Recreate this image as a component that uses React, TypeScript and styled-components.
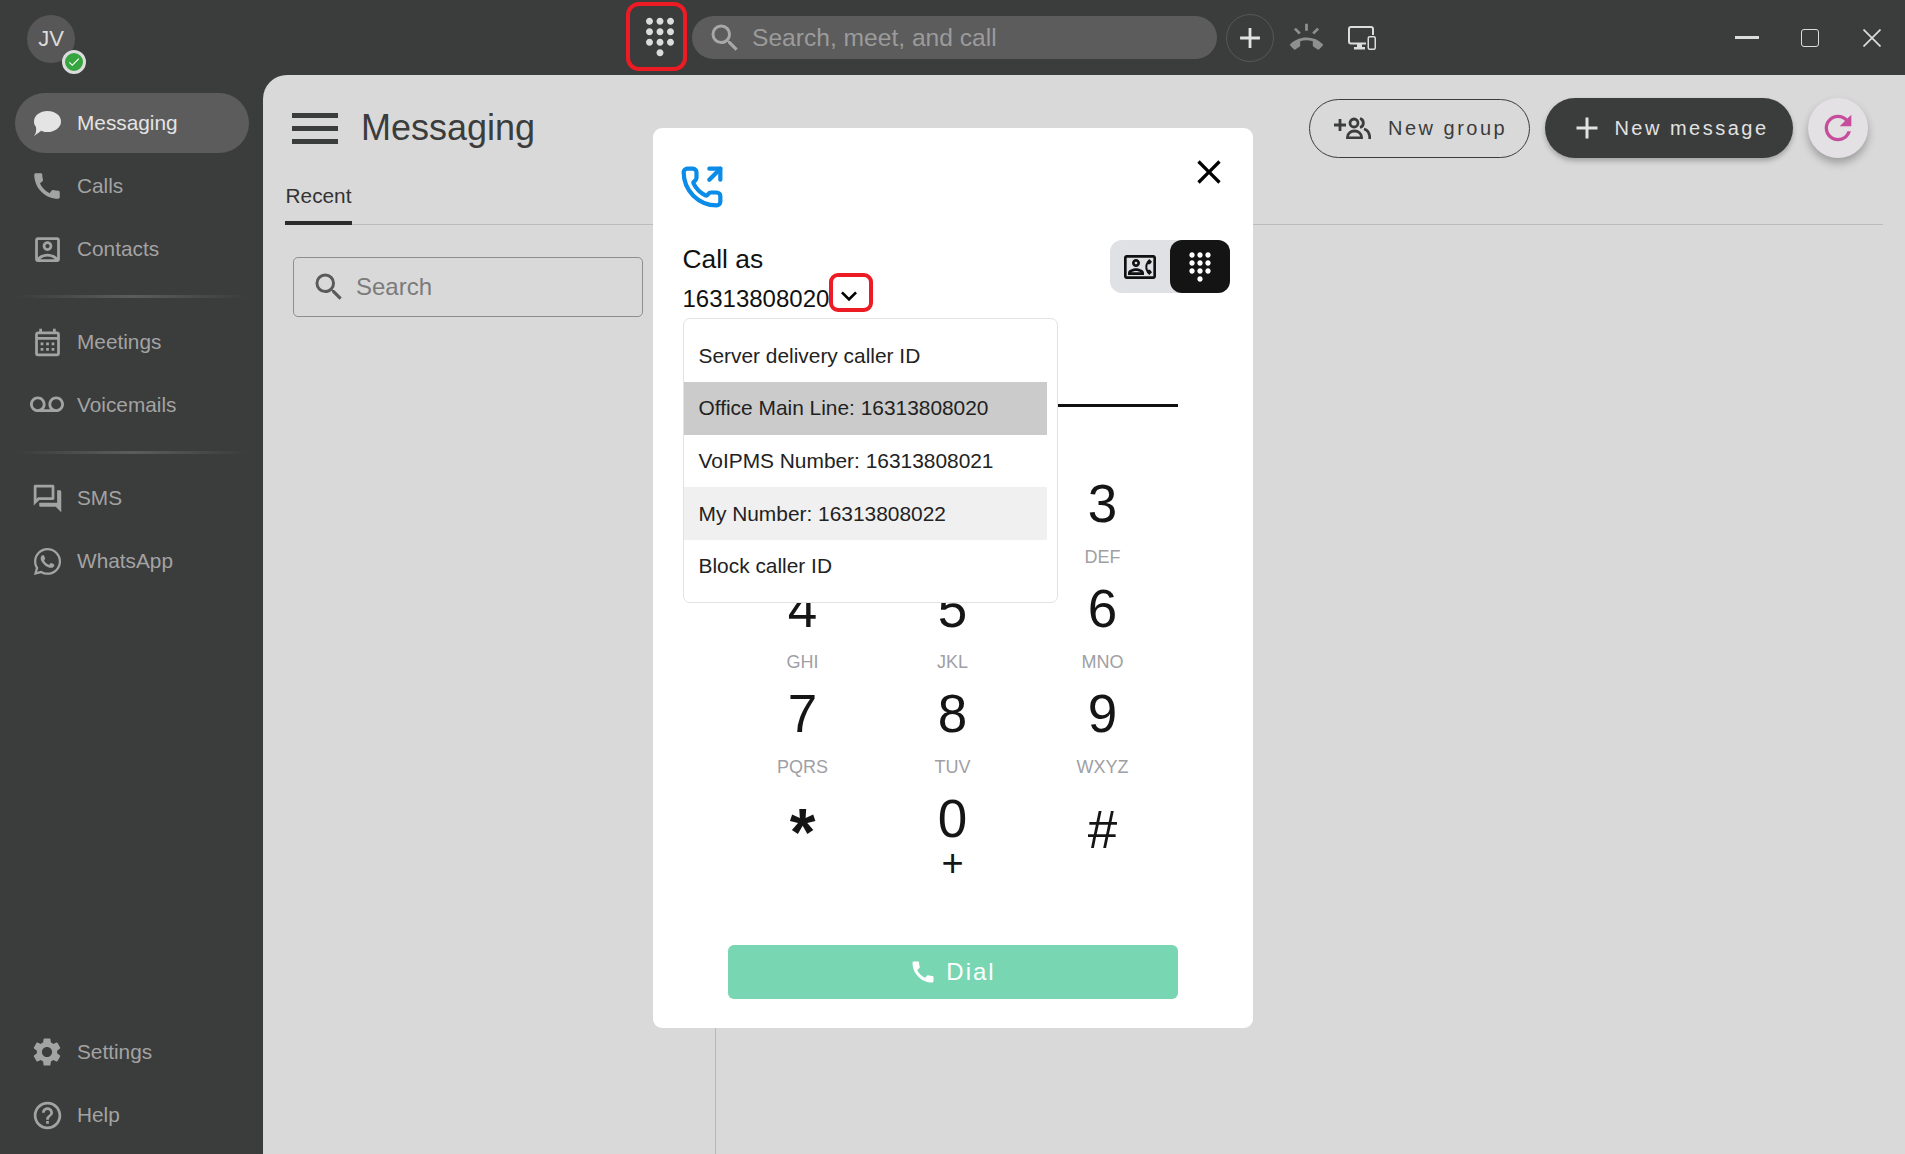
import React from "react";
import styled, { createGlobalStyle } from "styled-components";
import {
  MdCall, MdOutlineAccountBox, MdOutlineCalendarMonth, MdOutlineVoicemail, MdOutlineForum,
  MdSettings, MdHelpOutline, MdAdd, MdRefresh, MdSearch, MdRingVolume,
  MdOutlineContactPhone, MdDialpad, MdCheck, MdClose, MdExpandMore,
} from "react-icons/md";
import { FaWhatsapp } from "react-icons/fa";
import { PhoneOutgoing } from "lucide-react";

const Global = createGlobalStyle`
  html, body { margin: 0; padding: 0; height: 100%; background: #3b3c3c; overflow: hidden; }
  body { font-family: "Liberation Sans", Arial, sans-serif; }
  * { box-sizing: border-box; }
  button { font-family: inherit; }
`;

const Shell = styled.div`
  width: 1905px; height: 1154px; display: flex; flex-direction: column; background: #3b3c3c; position: relative;
`;
const TopBar = styled.header`
  height: 75px; flex: none; display: flex; align-items: center; padding: 0 24px 0 27px;
`;
const Avatar = styled.div`
  width: 48px; height: 48px; border-radius: 50%; background: #575757; color: #dcdcdc; font-size: 22px;
  display: flex; align-items: center; justify-content: center; position: relative; flex: none; margin-top: 3px;
`;
const StatusBadge = styled.span`
  position: absolute; left: 35px; top: 35px; width: 24px; height: 24px; border-radius: 50%;
  background: #36a53f; border: 3px solid #dcdcdc; color: #fff; display: flex; align-items: center; justify-content: center;
`;
const DialTrigger = styled.button`
  width: 61px; height: 69px; margin-left: 551px; border: 4px solid #ed1c24; border-radius: 13px; background: transparent;
  color: #dcdcdc; padding: 0 0 0 7px; display: flex; align-items: center; justify-content: center; flex: none; margin-top: -2px;
`;
const GlobalSearch = styled.div`
  width: 525px; height: 43px; margin-left: 5px; border-radius: 22px; background: #5c5c5c; display: flex; align-items: center;
  padding-left: 15px; gap: 9px; color: #a8a8a8; font-size: 24.6px; flex: none;
`;
const GlobalSearchText = styled.span` color: #9b9b9b; `;
const AddCircle = styled.button`
  width: 48px; height: 48px; margin-left: 9px; border-radius: 50%; border: 1px solid #575757; background: transparent;
  color: #e2e2e2; padding: 0; display: flex; align-items: center; justify-content: center; flex: none;
`;
const TopIcon = styled.span<{ $gap: number; $color: string }>`
  margin-left: ${(p) => p.$gap}px; color: ${(p) => p.$color}; display: flex; flex: none;
`;
const WindowControls = styled.div` margin-left: auto; display: flex; align-items: center; gap: 44px; `;
const MinimizeGlyph = styled.span` width: 24px; height: 3px; background: #dcdcdc; display: block; margin-right: -2px; `;
const MaximizeGlyph = styled.span` width: 18px; height: 18px; border: 1.5px solid #dcdcdc; border-radius: 3px; display: block; `;
const CloseGlyph = styled.svg` width: 18px; height: 18px; display: block; `;

const Body = styled.div` flex: 1; display: flex; min-height: 0; `;
const Sidebar = styled.nav`
  width: 263px; flex: none; padding: 18px 14px 6px 15px; display: flex; flex-direction: column;
`;
const NavItem = styled.div<{ $active?: boolean }>`
  height: 60px; border-radius: 30px; flex: none; margin-bottom: 3px; display: flex; align-items: center; padding-left: 15px; gap: 13px;
  background: ${(p) => (p.$active ? "#5c5c5c" : "transparent")};
  color: ${(p) => (p.$active ? "#e4e4e4" : "#a3a3a3")};
  font-size: 20.8px;
`;
const NavIcon = styled.span` width: 34px; height: 34px; display: flex; align-items: center; justify-content: center; flex: none; `;
const NavDivider = styled.div`
  height: 3px; margin: 13px 0 14px; flex: none;
  background: linear-gradient(to right, transparent, #5c5c5c 50%, transparent);
`;
const NavFooter = styled.div` margin-top: auto; `;

const Main = styled.main`
  flex: 1; background: #d9d9d9; border-top-left-radius: 24px; display: flex; flex-direction: column; min-width: 0;
`;
const MainHeader = styled.div`
  height: 60px; margin-top: 23px; padding: 0 37px 0 29px; display: flex; align-items: center; flex: none;
`;
const Hamburger = styled.div` width: 46px; height: 31px; display: flex; flex-direction: column; justify-content: space-between; flex: none; `;
const HamburgerBar = styled.span` height: 5px; background: #3b3c3c; display: block; `;
const Title = styled.h1` margin: 0 0 0 23px; font-size: 36px; font-weight: 400; color: #3b3c3c; `;
const HeaderActions = styled.div` margin-left: auto; display: flex; align-items: center; `;
const OutlineButton = styled.button`
  width: 221px; height: 59px; border-radius: 30px; border: 1px solid #3b3c3c; background: transparent; color: #3b3c3c;
  font-size: 20px; letter-spacing: 2.5px; display: flex; align-items: center; justify-content: flex-start; gap: 17px; padding: 0 0 0 24px; margin-right: 15px;
`;
const SolidButton = styled.button`
  width: 248px; height: 60px; border-radius: 30px; border: 0; background: #3b3c3c; color: #e2e2e2;
  font-size: 20px; letter-spacing: 2.5px; display: flex; align-items: center; justify-content: center; gap: 9px; padding: 0;
  box-shadow: 0 3px 5px rgba(0,0,0,.25);
`;
const RefreshButton = styled.button`
  width: 60px; height: 60px; margin-left: 15px; border-radius: 50%; border: 0; background: #e3e1e3; color: #c54d9b; padding: 0;
  display: flex; align-items: center; justify-content: center; box-shadow: 0 5px 9px rgba(0,0,0,.28);
`;
const TabsRow = styled.div`
  margin: 15px 22px 0; height: 52px; border-bottom: 1px solid #bcbcbc; display: flex; align-items: flex-end; flex: none;
`;
const Tab = styled.div`
  height: 52px; padding-top: 11px; width: 67px; font-size: 20.8px; color: #333; border-bottom: 4px solid #2b2b2b; margin-bottom: -1px; text-align: center; white-space: nowrap;
`;
const Split = styled.div` flex: 1; display: flex; min-height: 0; `;
const ListColumn = styled.div` width: 453px; border-right: 1px solid #b8b8b8; padding: 32px 0 0 30px; flex: none; `;
const ListSearch = styled.div`
  width: 350px; height: 60px; border: 1px solid #8e8e8e; border-radius: 5px; display: flex; align-items: center; padding-left: 17px; gap: 9px;
  color: #5a5a5a; font-size: 24px;
`;
const ListSearchText = styled.span` color: #7b7b7b; `;

const ModalLayer = styled.div`
  position: absolute; inset: 0; display: flex; align-items: center; justify-content: center;
`;
const Modal = styled.section`
  width: 600px; height: 900px; background: #fff; border-radius: 9px; padding: 37px 23px 29px 30px; display: flex; flex-direction: column; margin-top: 2px;
`;
const ModalHead = styled.div` display: flex; justify-content: space-between; align-items: flex-start; height: 75px; color: #0b8ce9; flex: none; margin-left: -3px; `;
const ModalClose = styled.span` color: #000; display: flex; margin: -13px 1px 0 0; `;
const CallerRow = styled.div` display: flex; justify-content: space-between; align-items: flex-start; height: 78px; flex: none; `;
const CallerBlock = styled.div` position: relative; height: 78px; `;
const CallAs = styled.div` font-size: 26.4px; line-height: 38px; color: #111; `;
const NumberRow = styled.div` display: flex; align-items: flex-start; font-size: 24px; line-height: 42px; color: #111; `;
const ChevronBox = styled.span`
  width: 44px; height: 39px; margin-top: -5px; border: 4px solid #ed1c24; border-radius: 9px; display: flex; align-items: center; justify-content: center; color: #000; padding: 7px 4px 0 0;
`;
const Dropdown = styled.div`
  position: absolute; left: 0; top: 78px; width: 375px; height: 285px; background: #fff; border: 1px solid #e2e2e2; border-radius: 7px; padding: 10.5px 10px 10px 0; z-index: 2;
`;
const Option = styled.div<{ $state?: "selected" | "hover" }>`
  height: 52.6px; display: flex; align-items: center; padding-left: 15px; font-size: 20.9px; color: #222;
  background: ${(p) => (p.$state === "selected" ? "#cbcbcb" : p.$state === "hover" ? "#f0f0f0" : "transparent")};
`;
const ModeToggle = styled.div` width: 120px; height: 53px; border-radius: 12px; background: #e0e1e5; display: flex; `;
const ModeOption = styled.span<{ $active?: boolean }>`
  width: 60px; height: 53px; border-radius: 12px; display: flex; align-items: center; justify-content: center;
  background: ${(p) => (p.$active ? "#141414" : "transparent")}; color: ${(p) => (p.$active ? "#fff" : "#111")};
`;
const DialLine = styled.div` width: 450px; height: 89px; margin-left: 45px; border-bottom: 3px solid #111; flex: none; `;
const Keypad = styled.div`
  width: 450px; margin: 67px 0 0 45px; display: grid; grid-template-columns: repeat(3, 150px); row-gap: 9px; flex: none;
`;
const Key = styled.div` height: 96px; display: flex; flex-direction: column; align-items: center; `;
const Digit = styled.span<{ $shift?: number; $size?: number; $weight?: number }>`
  font-size: ${(p) => p.$size ?? 53}px; font-weight: ${(p) => p.$weight ?? 400}; line-height: 60px; height: 60px; color: #151515; margin-top: ${(p) => p.$shift ?? 0}px;
`;
const Letters = styled.span` font-size: 18px; line-height: 24px; margin-top: 11px; color: #a0a0a4; `;
const Plus = styled.span` font-size: 38px; line-height: 24px; margin-top: 2px; color: #151515; `;
const DialButton = styled.button`
  margin: auto 0 0 45px; width: 450px; height: 54px; border: 0; border-radius: 6px; background: #78d6b3; color: #fff; font-size: 24px; letter-spacing: 2px;
  display: flex; align-items: center; justify-content: center; gap: 9px; padding: 0; flex: none;
`;

const nav = [
  { label: "Calls", icon: <MdCall size={34} /> },
  { label: "Contacts", icon: <MdOutlineAccountBox size={33} /> },
];
const nav2 = [
  { label: "Meetings", icon: <MdOutlineCalendarMonth size={33} /> },
  { label: "Voicemails", icon: <MdOutlineVoicemail size={36} /> },
];
const nav3 = [
  { label: "SMS", icon: <MdOutlineForum size={33} /> },
  { label: "WhatsApp", icon: <FaWhatsapp size={31} /> },
];
const nav4 = [
  { label: "Settings", icon: <MdSettings size={34} /> },
  { label: "Help", icon: <MdHelpOutline size={33} /> },
];
const renderNav = (items: { label: string; icon: React.ReactNode }[]) =>
  items.map((it) => (
    <NavItem key={it.label}>
      <NavIcon>{it.icon}</NavIcon>
      {it.label}
    </NavItem>
  ));

const keys = [
  ["1", ""], ["2", "ABC"], ["3", "DEF"],
  ["4", "GHI"], ["5", "JKL"], ["6", "MNO"],
  ["7", "PQRS"], ["8", "TUV"], ["9", "WXYZ"],
];
const options: { t: string; s?: "selected" | "hover" }[] = [
  { t: "Server delivery caller ID" },
  { t: "Office Main Line: 16313808020", s: "selected" },
  { t: "VoIPMS Number: 16313808021" },
  { t: "My Number: 16313808022", s: "hover" },
  { t: "Block caller ID" },
];

const GroupAddIcon = () => (
  <svg width="37" height="22" viewBox="0 0 37 22" fill="none" stroke="currentColor" strokeWidth="2.8">
    <path d="M0 8H12M6 2V14" />
    <circle cx="20" cy="6" r="4" />
    <path d="M26 1.5A4.7 4.7 0 0 1 26 10.5" />
    <path d="M13.5 21V20A7 6 0 0 1 27.5 20V21Z" />
    <path d="M30 12C34 13 35.8 17 35.8 22" />
  </svg>
);

const DevicesIcon = () => (
  <svg width="28" height="24" viewBox="0 0 28 24" fill="none" stroke="currentColor">
    <path d="M18 17.5H3A2 2 0 0 1 1 15.5V3A2 2 0 0 1 3 1H23A2 2 0 0 1 25 3V9" strokeWidth="2" />
    <path d="M9 18H14V21H17V23.5H6V21H9Z" fill="currentColor" stroke="none" />
    <rect x="20.25" y="10.75" width="7" height="12.5" rx="1.5" strokeWidth="1.5" />
  </svg>
);

export default function App() {
  return (
    <Shell>
      <Global />
      <TopBar>
        <Avatar>
          JV
          <StatusBadge><MdCheck size={14} /></StatusBadge>
        </Avatar>
        <DialTrigger><MdDialpad size={42} /></DialTrigger>
        <GlobalSearch>
          <MdSearch size={36} />
          <GlobalSearchText>Search, meet, and call</GlobalSearchText>
        </GlobalSearch>
        <AddCircle><MdAdd size={34} /></AddCircle>
        <TopIcon $gap={16} $color="#8f8f8f"><MdRingVolume size={33} /></TopIcon>
        <TopIcon $gap={25} $color="#dcdcdc"><DevicesIcon /></TopIcon>
        <WindowControls>
          <MinimizeGlyph />
          <MaximizeGlyph />
          <CloseGlyph viewBox="0 0 18 18"><path d="M0.5 0.5 17.5 17.5M17.5 0.5 0.5 17.5" stroke="#dcdcdc" strokeWidth="1.7" /></CloseGlyph>
        </WindowControls>
      </TopBar>
      <Body>
        <Sidebar>
          <NavItem $active>
            <NavIcon>
              <svg width="28" height="25" viewBox="0 0 28 25">
                <ellipse cx="14.5" cy="10.5" rx="13.5" ry="10.5" fill="currentColor" />
                <path d="M6 16 L8 20 L1 25 Q4 21 3 16Z" fill="currentColor" />
              </svg>
            </NavIcon>
            Messaging
          </NavItem>
          {renderNav(nav)}
          <NavDivider />
          {renderNav(nav2)}
          <NavDivider />
          {renderNav(nav3)}
          <NavFooter>{renderNav(nav4)}</NavFooter>
        </Sidebar>
        <Main>
          <MainHeader>
            <Hamburger><HamburgerBar /><HamburgerBar /><HamburgerBar /></Hamburger>
            <Title>Messaging</Title>
            <HeaderActions>
              <OutlineButton><GroupAddIcon />New group</OutlineButton>
              <SolidButton><MdAdd size={36} />New message</SolidButton>
              <RefreshButton><MdRefresh size={40} /></RefreshButton>
            </HeaderActions>
          </MainHeader>
          <TabsRow><Tab>Recent</Tab></TabsRow>
          <Split>
            <ListColumn>
              <ListSearch>
                <MdSearch size={36} />
                <ListSearchText>Search</ListSearchText>
              </ListSearch>
            </ListColumn>
          </Split>
        </Main>
      </Body>
      <ModalLayer>
        <Modal>
          <ModalHead>
            <PhoneOutgoing size={44} strokeWidth={2.3} />
            <ModalClose><MdClose size={40} /></ModalClose>
          </ModalHead>
          <CallerRow>
            <CallerBlock>
              <CallAs>Call as</CallAs>
              <NumberRow>
                16313808020
                <ChevronBox><MdExpandMore size={34} /></ChevronBox>
              </NumberRow>
              <Dropdown>
                {options.map((o) => <Option key={o.t} $state={o.s}>{o.t}</Option>)}
              </Dropdown>
            </CallerBlock>
            <ModeToggle>
              <ModeOption><MdOutlineContactPhone size={32} /></ModeOption>
              <ModeOption $active><MdDialpad size={32} /></ModeOption>
            </ModeToggle>
          </CallerRow>
          <DialLine />
          <Keypad>
            {keys.map(([d, l]) => (
              <Key key={d}>
                <Digit>{d}</Digit>
                <Letters>{l}</Letters>
              </Key>
            ))}
            <Key><Digit $shift={13} $size={66} $weight={700}>*</Digit></Key>
            <Key><Digit>0</Digit><Plus>+</Plus></Key>
            <Key><Digit $shift={11}>#</Digit></Key>
          </Keypad>
          <DialButton><MdCall size={28} />Dial</DialButton>
        </Modal>
      </ModalLayer>
    </Shell>
  );
}
